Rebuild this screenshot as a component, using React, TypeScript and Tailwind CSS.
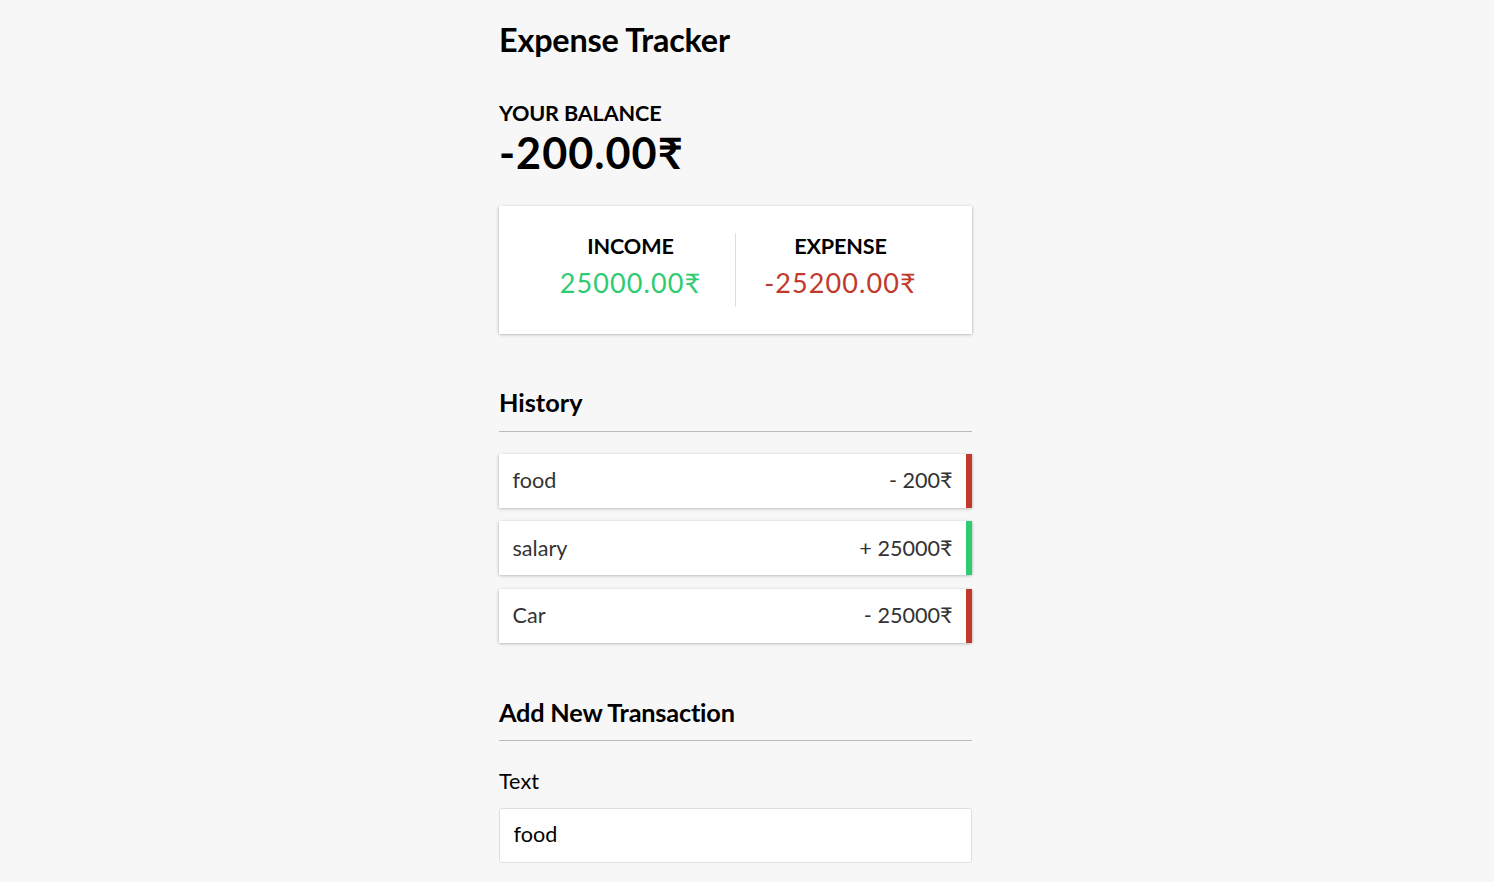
import React from 'react'

type Txn = { id: number; text: string; amount: number }

const txns: Txn[] = [
  { id: 1, text: 'food', amount: -200 },
  { id: 2, text: 'salary', amount: 25000 },
  { id: 3, text: 'Car', amount: -25000 },
]

export default function App() {
  const income = txns.filter(t => t.amount > 0).reduce((a, t) => a + t.amount, 0)
  const expense = txns.filter(t => t.amount < 0).reduce((a, t) => a + t.amount, 0)
  const balance = income + expense

  return (
    <div className="min-h-screen bg-[#f7f7f7] text-black font-['Lato',sans-serif]">
      <div className="w-[473px] ml-[499px] pt-[21px] pb-[40px]">
        <h2 className="text-[32.4px] font-bold leading-[1.2] tracking-[-0.2px]">Expense Tracker</h2>

        {/* balance */}
        <h4 className="mt-[41px] text-[21.6px] font-bold uppercase leading-[1.2] tracking-[-0.15px]">Your Balance</h4>
        <h1 className="text-[43.2px] font-bold leading-[1.2] tracking-[1px]">{balance.toFixed(2)}₹</h1>

        {/* income / expense */}
        <div className="mt-[27px] flex bg-white p-[27px] shadow-[0_1.35px_4px_rgba(0,0,0,0.12),0_1.35px_2.7px_rgba(0,0,0,0.24)]">
          <div className="flex-1 text-center border-r border-[#dedede]">
            <h4 className="text-[21.6px] font-bold uppercase leading-[27px] tracking-[-0.15px]">Income</h4>
            <p className="my-[6.75px] text-[27px] leading-[34px] tracking-[1.1px] text-[#2ecc71]">{income.toFixed(2)}₹</p>
          </div>
          <div className="flex-1 text-center">
            <h4 className="text-[21.6px] font-bold uppercase leading-[27px] tracking-[-0.15px]">Expense</h4>
            <p className="my-[6.75px] text-[27px] leading-[34px] tracking-[1.1px] text-[#c0392b]">{expense.toFixed(2)}₹</p>
          </div>
        </div>

        {/* history */}
        <h3 className="mt-[53px] pb-[13.5px] border-b border-[#bbb] text-[25.3px] font-bold leading-[1.2]">History</h3>
        <ul className="mt-[21.6px] flex flex-col gap-[13.5px]">
          {txns.map(t => (
            <li
              key={t.id}
              className={
                'flex justify-between bg-white p-[13.5px] text-[21.6px] leading-[27px] text-[#333] shadow-[0_1.35px_4px_rgba(0,0,0,0.12),0_1.35px_2.7px_rgba(0,0,0,0.24)] border-r-[6.75px] ' +
                (t.amount < 0 ? 'border-[#c0392b]' : 'border-[#2ecc71]')
              }
            >
              <span>{t.text}</span>
              <span>{t.amount < 0 ? '-' : '+'} {Math.abs(t.amount)}₹</span>
            </li>
          ))}
        </ul>

        {/* add new */}
        <h3 className="mt-[54px] pb-[13.5px] border-b border-[#bbb] text-[25.3px] font-bold leading-[1.2] tracking-[-0.2px]">Add New Transaction</h3>
        <form className="mt-[13.5px]">
          <label className="inline-block mt-[13.5px] mb-[12.5px] text-[21.6px] leading-[27px]">Text</label>
          <input
            type="text"
            defaultValue="food"
            className="block w-full bg-white border-[1.35px] border-[#dedede] rounded-[2.7px] p-[13.5px] text-[21.6px] leading-[1.2] text-black outline-none"
          />
        </form>
      </div>
    </div>
  )
}
